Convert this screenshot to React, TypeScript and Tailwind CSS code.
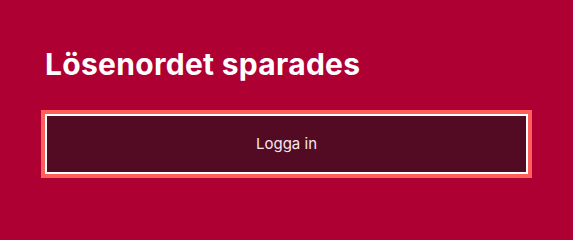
export default function App() {
  return (
    <div className="h-[240px] w-full bg-[#ae0033] px-[41px] pt-[44px] font-['Inter','Noto_Sans',sans-serif]">
      <h1 className="pl-[4px] text-[30px] font-bold leading-[40px] tracking-[0.3px] text-white">
        Lösenordet sparades
      </h1>
      <div className="mt-[26px] bg-[#ff5f5a] p-[4px]">
        <button
          type="button"
          className="flex h-[60px] w-full items-center justify-center border-2 border-white bg-[#520b23] text-[15px] text-[#f5e9f0]"
        >
          Logga in
        </button>
      </div>
    </div>
  );
}
